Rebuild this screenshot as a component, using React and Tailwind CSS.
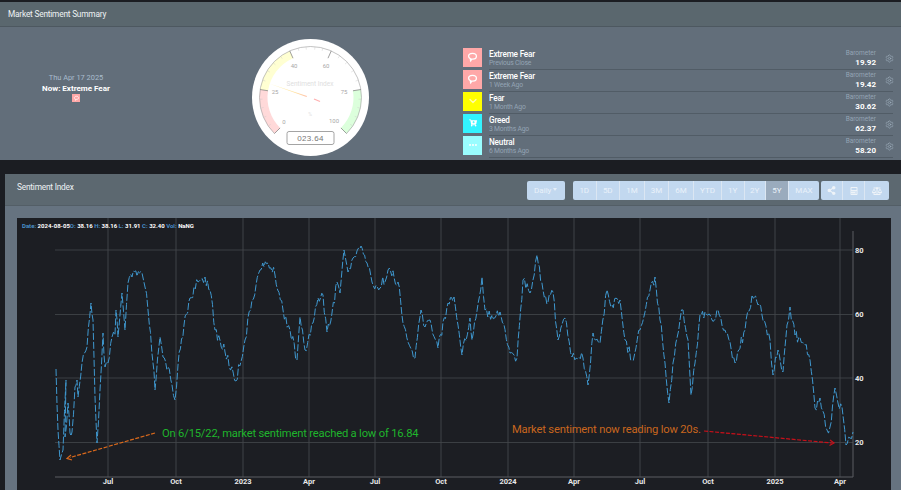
import React from "react";
import { Settings, Ellipsis, ChevronDown } from "lucide-react";
import { FaCartPlus, FaCalculator, FaBalanceScale, FaShareAlt } from "react-icons/fa";

const sentimentRows = [
  { label: "Extreme Fear", ago: "Previous Close", value: "19.92", box: "bg-[#ffa8a8]", icon: "fear" },
  { label: "Extreme Fear", ago: "1 Week Ago", value: "19.42", box: "bg-[#ffa8a8]", icon: "fear" },
  { label: "Fear", ago: "1 Month Ago", value: "30.62", box: "bg-[#ffff00]", icon: "down" },
  { label: "Greed", ago: "3 Months Ago", value: "62.37", box: "bg-[#33f3ff]", icon: "cart" },
  { label: "Neutral", ago: "6 Months Ago", value: "58.20", box: "bg-[#99fdff]", icon: "dots" },
];

const ranges = [
  ["1D", "w-[23.5px]"],
  ["5D", "w-[23.5px]"],
  ["1M", "w-[25px]"],
  ["3M", "w-[24px]"],
  ["6M", "w-[25px]"],
  ["YTD", "w-[28px]"],
  ["1Y", "w-[22.5px]"],
  ["2Y", "w-[21.5px]"],
  ["5Y", "w-[23px]"],
  ["MAX", "w-[30px]"],
];

// traced by hand from the chart, in px inside the page
const points = [
  [56, 369], [58, 430], [60, 460], [63, 450], [66, 380], [65, 437], [68, 403], [70, 433], [72, 432], [75, 387], [77, 380],
  [78, 397], [82, 363], [87, 347], [91, 303], [93, 320], [95, 397], [97, 443], [100, 390], [103, 333], [105, 367],
  [108, 363], [112, 337], [115, 335], [116, 310], [118, 337], [122, 293], [125, 330], [128, 283], [132, 277], [142, 273],
  [145, 287], [148, 310], [153, 363], [155, 390], [160, 337], [163, 357], [168, 367], [172, 385], [175, 400], [178, 365],
  [184, 325], [190, 298], [198, 282], [205, 277], [210, 290], [215, 330], [225, 352], [236, 381], [245, 340], [252, 300],
  [260, 270], [268, 263], [275, 275], [283, 310], [290, 330], [297, 360], [300, 317], [305, 350], [313, 323], [318, 298],
  [323, 295], [327, 332], [332, 313], [337, 282], [340, 293], [344, 250], [348, 272], [353, 258], [361, 246], [367, 263],
  [372, 282], [380, 288], [388, 270], [398, 282], [403, 323], [408, 342], [415, 358], [421, 310], [425, 327], [430, 320],
  [438, 348], [448, 303], [454, 297], [462, 355], [470, 318], [472, 340], [482, 277], [485, 310], [492, 315], [500, 312],
  [510, 353], [517, 358], [523, 280], [530, 293], [537, 255], [543, 290], [548, 302], [553, 292], [558, 340], [565, 318],
  [572, 357], [583, 358], [588, 385], [593, 333], [600, 343], [607, 290], [612, 305], [620, 300], [625, 340], [632, 360],
  [640, 330], [650, 290], [655, 277], [660, 320], [665, 363], [669, 403], [673, 363], [680, 320], [683, 310], [688, 340],
  [691, 395], [695, 363], [700, 315], [705, 312], [712, 320], [718, 310], [725, 330], [735, 363], [745, 330], [752, 295],
  [758, 305], [762, 315], [770, 340], [773, 375], [778, 350], [783, 372], [787, 325], [790, 307], [795, 335], [805, 345],
  [810, 360], [815, 408], [820, 398], [827, 430], [830, 427], [835, 388], [838, 403], [842, 407], [846, 445], [850, 438],
  [853, 432],
];

const jitter = (i) => {
  const n = Math.sin(i * 12.9898) * 43758.5453;
  return (n - Math.floor(n) - 0.5) * 11;
};

const buildLine = () => {
  const out = [];
  for (let p = 0; p < points.length - 1; p++) {
    const [x1, y1] = points[p];
    const [x2, y2] = points[p + 1];
    const steps = Math.max(1, Math.round((x2 - x1) / 1.3));
    for (let s = 0; s < steps; s++) {
      const t = s / steps;
      const keep = s === 0 ? 0 : jitter(out.length);
      out.push(`${(x1 + (x2 - x1) * t).toFixed(1)},${(y1 + (y2 - y1) * t + keep).toFixed(1)}`);
    }
  }
  out.push("853,432");
  return out.join(" ");
};

const linePath = buildLine();

const xTicks = [
  [108, "Jul"], [176, "Oct"], [243, "2023"], [309, "Apr"], [375, "Jul"], [441, "Oct"],
  [508, "2024"], [574, "Apr"], [640, "Jul"], [708, "Oct"], [775, "2025"], [840, "Apr"],
];
const yTicks = [[250, "80"], [314.5, "60"], [378, "40"], [442.5, "20"]];

const FearIcon = ({ className }) => (
  <svg viewBox="0 0 20 20" className={className} fill="none" stroke="currentColor" strokeWidth="2">
    <path d="M10 3.5c3.6 0 6 2 6 4.6 0 2.7-2.6 4.4-5.6 4.4-.7 0-1.2 0-1.7-.1-.5 1-.9 2.1-1.5 3-.5-1.1-.3-2.3-.5-3.6C5 11 4 9.6 4 8.1 4 5.5 6.4 3.5 10 3.5z" />
  </svg>
);

const RowIcon = ({ type }) => {
  if (type === "fear") return <FearIcon className="h-[13px] w-[13px] text-white" />;
  if (type === "down") return <ChevronDown className="h-[12px] w-[12px] text-[#fffbb0]" strokeWidth={2.5} />;
  if (type === "cart") return <FaCartPlus className="h-[8px] w-[8px] text-white" />;
  return <Ellipsis className="h-[10px] w-[10px] text-white" strokeWidth={3} />;
};

const polar = (deg, r) => {
  const a = ((deg - 90) * Math.PI) / 180;
  return [58.5 + r * Math.cos(a), 58.5 + r * Math.sin(a)];
};

const band = (a1, a2) => {
  const [x1, y1] = polar(a1, 51);
  const [x2, y2] = polar(a2, 51);
  const [x3, y3] = polar(a2, 43);
  const [x4, y4] = polar(a1, 43);
  return `M${x1} ${y1}A51 51 0 0 1 ${x2} ${y2}L${x3} ${y3}A43 43 0 0 0 ${x4} ${y4}Z`;
};

// the gauge's rim runs 270 degrees, so it needs the large arc flag
const rimPath = () => {
  const [x1, y1] = polar(-135, 51);
  const [x2, y2] = polar(135, 51);
  return `M${x1} ${y1}A51 51 0 1 1 ${x2} ${y2}`;
};

const majorAngles = [-135, -81, -24, 24, 81, 135];
const minorAngles = [-124, -113, -102, -92, -70, -58, -47, -36, -14, -5, 5, 14, 35, 46, 58, 70, 92, 102, 113, 124];

const Gauge = () => (
  <svg width="117" height="117" viewBox="0 0 117 117" className="block">
    <defs>
      <linearGradient id="needle" x1="0" x2="1" y1="0" y2="0">
        <stop offset="0" stopColor="#fff8b0" />
        <stop offset="0.7" stopColor="#ffe0a0" />
        <stop offset="1" stopColor="#ffc0a8" />
      </linearGradient>
    </defs>
    <circle cx="58.5" cy="58.5" r="58.5" fill="#ffffff" />
    <path d={band(-135, -81)} fill="#ffd9d9" />
    <path d={band(-81, -24)} fill="#ffffd2" />
    <path d={band(81, 135)} fill="#dcffdc" />
    <path d={rimPath()} fill="none" stroke="#9a9a9a" strokeWidth="0.6" />
    {majorAngles.map((a) => {
      const [x1, y1] = polar(a, 51);
      const [x2, y2] = polar(a, 43);
      return <line key={a} x1={x1} y1={y1} x2={x2} y2={y2} stroke="#777777" strokeWidth="0.7" />;
    })}
    {minorAngles.map((a) => {
      const [x1, y1] = polar(a, 51);
      const [x2, y2] = polar(a, 48);
      return <line key={a} x1={x1} y1={y1} x2={x2} y2={y2} stroke="#c4c4c4" strokeWidth="0.4" />;
    })}
    <g fontFamily="Roboto, sans-serif" fontSize="6" fill="#a8a8a8" textAnchor="middle">
      <text x="23" y="55">25</text>
      <text x="42" y="29">40</text>
      <text x="74" y="29">60</text>
      <text x="92" y="55">75</text>
      <text x="32" y="85">0</text>
      <text x="82" y="84">100</text>
      <text x="58" y="47" fill="#dedede" fontSize="6.5">Sentiment Index</text>
      <text x="58" y="77" fill="#e2e2e2" fontSize="5">%</text>
    </g>
    <polygon points="17,44.5 55,57 54.5,58" fill="url(#needle)" />
    <line x1="62" y1="60" x2="68" y2="62.5" stroke="#ffb0b0" strokeWidth="1.2" />
    <rect x="35" y="92.5" width="47" height="13" rx="2" fill="#ffffff" stroke="#9a9a9a" strokeWidth="0.9" />
    <text x="58.5" y="102" fontFamily="'Liberation Sans', sans-serif" fontSize="8" fill="#777777" textAnchor="middle" letterSpacing="0.3">023.64</text>
  </svg>
);

const Chart = () => (
  <svg width="874" height="272" viewBox="17 218 874 272" className="block">
    {xTicks.map(([x]) => (
      <line key={x} x1={x} y1="218" x2={x} y2="477" stroke="#4a4d52" strokeWidth="0.8" />
    ))}
    {yTicks.map(([y]) => (
      <line key={y} x1="55" y1={y} x2="853" y2={y} stroke="#44474b" strokeWidth="0.8" />
    ))}
    <line x1="55" y1="477" x2="853" y2="477" stroke="#5a5d62" strokeWidth="1.2" />
    <line x1="853" y1="231" x2="853" y2="477" stroke="#5a5d62" strokeWidth="1" />
    <polyline points={linePath} fill="none" stroke="#3f98cf" strokeWidth="1" strokeDasharray="7 2" />
    <g fontFamily="Roboto, sans-serif" fontSize="7.5" fontWeight="700" fill="#e8e8e8">
      {xTicks.map(([x, t]) => (
        <text key={x} x={x} y="484" textAnchor="middle">{t}</text>
      ))}
      {yTicks.map(([y, t]) => (
        <text key={y} x="855" y={y + 2.5}>{t}</text>
      ))}
    </g>
    <line x1="155" y1="433" x2="70" y2="457.5" stroke="#d9691c" strokeWidth="1.2" strokeDasharray="4 1.5" />
    <path d="M71 455l-4 3.4 5 1.6" fill="none" stroke="#d9691c" strokeWidth="1.2" />
    <line x1="704" y1="431" x2="832" y2="443" stroke="#c8101a" strokeWidth="1.2" strokeDasharray="4 1.5" />
    <path d="M830 440l4 3-4.5 2.5" fill="none" stroke="#c8101a" strokeWidth="1.2" />
    <g fontFamily="Roboto, sans-serif" fontSize="11.2" letterSpacing="-0.18">
      <text x="162" y="437" fill="#1fb52c">On 6/15/22, market sentiment reached a low of 16.84</text>
      <text x="512" y="433" fill="#c8661e">Market sentiment now reading low 20s.</text>
    </g>
  </svg>
);

export default function App() {
  return (
    <div className="h-[490px] w-[901px] overflow-hidden bg-[#1b1d22] pt-[2px] font-['Roboto',sans-serif]">
      <section className="h-[158px] bg-[#626e7a]">
        <div className="flex h-[25px] items-center border-b border-[#4d5860] bg-[#5a676e] pl-[8px] pt-[1px] text-[8.3px] tracking-[-0.2px] text-[#eef2f4]">
          Market Sentiment Summary
        </div>
        <div className="flex h-[133px]">
          <div className="flex w-[152px] flex-col items-center pt-[45px]">
            <div className="text-[7.4px] leading-[11px] text-[#a9bccd]">Thu Apr 17 2025</div>
            <div className="text-[8px] font-bold leading-[11px] text-white">Now: Extreme Fear</div>
            <div className="flex h-[8px] w-[8px] items-center justify-center bg-[#ffa8a8]">
              <FearIcon className="h-[7px] w-[7px] text-white" />
            </div>
          </div>
          <div className="flex w-[311px] justify-center pl-[6px] pt-[12px]">
            <Gauge />
          </div>
          <div className="flex-1 pt-[20.5px] pr-[8px]">
            {sentimentRows.map((row, i) => (
              <div key={i} className="flex h-[22px] items-start">
                <div className={`flex h-[19px] w-[19px] shrink-0 items-center justify-center ${row.box}`}>
                  <RowIcon type={row.icon} />
                </div>
                <div className="ml-[7px] flex h-[22px] flex-1 items-start border-b-[1.5px] border-[#515c66] pt-[1px]">
                  <div className="flex-1">
                    <div className="text-[8.2px] font-medium leading-[10px] tracking-[-0.2px] text-white">{row.label}</div>
                    <div className="text-[6.8px] leading-[8px] tracking-[-0.2px] text-[#94a4b4]">{row.ago}</div>
                  </div>
                  <div className="text-right">
                    <div className="text-[6.5px] leading-[9px] text-[#94a4b4]">Barometer</div>
                    <div className="text-[8px] font-bold leading-[10px] text-white">{row.value}</div>
                  </div>
                  <Settings className="ml-[9px] mr-[-1px] mt-[5px] h-[9px] w-[9px] text-[#a3b2c0]" strokeWidth={1.5} />
                </div>
              </div>
            ))}
          </div>
        </div>
      </section>

      <section className="ml-[5px] mt-[14px] h-[316px] rounded-tl-[3px] bg-[#667380]">
        <div className="flex h-[32px] items-start justify-between border-b border-[#535e66] bg-[#5c6870] pl-[12px] pr-[12px] pt-[7px]">
          <div className="text-[8.3px] tracking-[-0.2px] text-[#eef2f4]">Sentiment Index</div>
          <div className="flex text-[8px] text-[#eaf2fa]">
            <button className="mr-[8.5px] flex h-[19px] w-[37.5px] items-center justify-center gap-[2px] rounded-[2px] bg-[#c2d8ef]">
              Daily <span className="mt-[-2px] border-x-[2.5px] border-t-[3px] border-x-transparent border-t-[#e6eef7]" />
            </button>
            <div className="flex h-[19px] overflow-hidden rounded-[2px]">
              {ranges.map(([r, w]) => (
                <button
                  key={r}
                  className={`flex items-center justify-center border-r border-[#dbe6f2] last:border-r-0 ${w} ${r === "5Y" ? "bg-[#9aabbd]" : "bg-[#c2d8ef]"}`}
                >
                  {r}
                </button>
              ))}
            </div>
            <div className="ml-[2px] flex h-[19px] overflow-hidden rounded-[2px] text-[#eef3f8]">
              <button className="flex w-[22px] items-center justify-center border-r border-[#dbe6f2] bg-[#c2d8ef]">
                <FaShareAlt className="h-[9px] w-[9px]" />
              </button>
              <button className="flex w-[22px] items-center justify-center border-r border-[#dbe6f2] bg-[#c2d8ef]">
                <FaCalculator className="h-[8px] w-[8px]" />
              </button>
              <button className="flex w-[24px] items-center justify-center bg-[#c2d8ef]">
                <FaBalanceScale className="h-[10px] w-[10px]" />
              </button>
            </div>
          </div>
        </div>
        <div className="pl-[12px] pt-[12px]">
          <div className="relative h-[272px] w-[874px] bg-[#1c1e23]">
            <Chart />
            <div className="absolute left-[5px] top-[4px] whitespace-nowrap text-[6px] font-bold leading-[8px] text-white">
              <span className="text-[#4a90c8]">Date: </span>2024-08-05
              <span className="text-[#4a90c8]">O: </span>38.16
              <span className="text-[#4a90c8]"> H: </span>38.16
              <span className="text-[#4a90c8]"> L: </span>31.91
              <span className="text-[#4a90c8]"> C: </span>32.40
              <span className="text-[#4a90c8]"> Vol: </span>NaNG
            </div>
          </div>
        </div>
      </section>
    </div>
  );
}
